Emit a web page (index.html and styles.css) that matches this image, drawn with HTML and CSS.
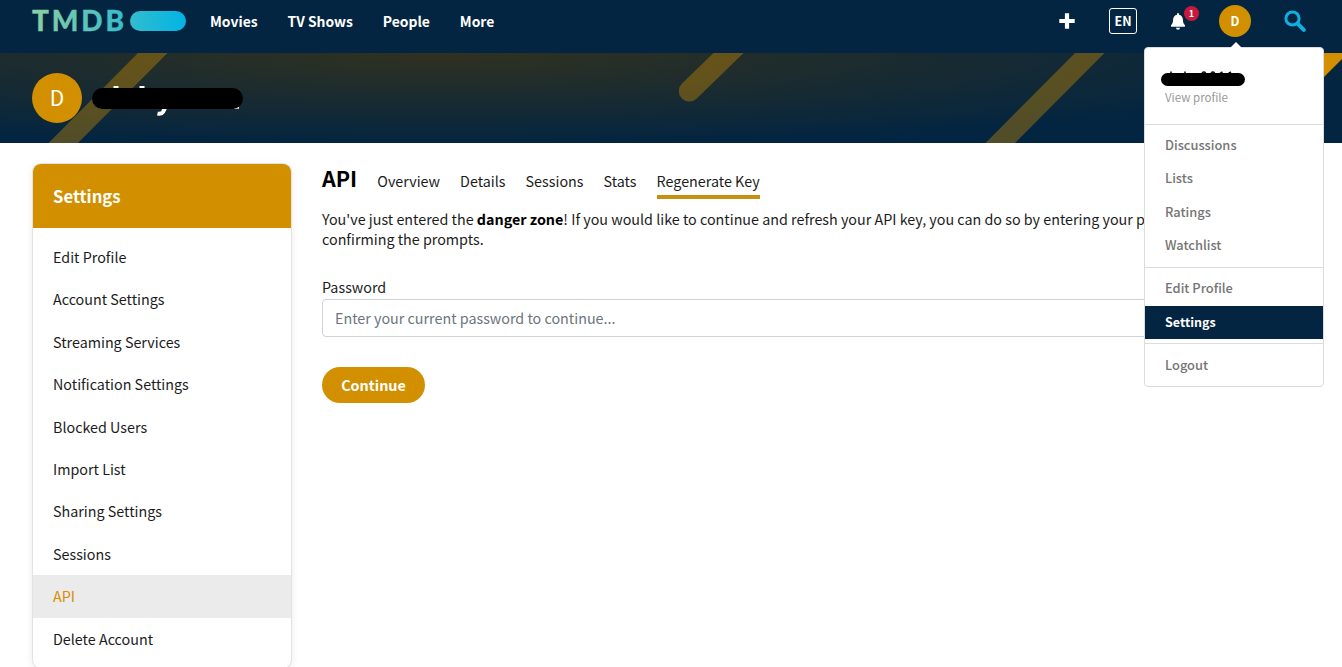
FILE: index.html
```html
<!DOCTYPE html>
<html lang="en">
<head>
<meta charset="utf-8">
<title>API Settings</title>
<link rel="stylesheet" href="styles.css">
</head>
<body>
<header class="topbar">
  <svg class="logo" width="154" height="22" viewBox="0 0 154 22">
    <defs>
      <linearGradient id="brand" gradientUnits="userSpaceOnUse" x1="0" y1="0" x2="154" y2="0">
        <stop offset="0" stop-color="#90cea1"/>
        <stop offset=".56" stop-color="#3cbec9"/>
        <stop offset="1" stop-color="#01b4e4"/>
      </linearGradient>
    </defs>
    <text class="logo-text" x="0" y="21" textLength="92" fill="url(#brand)" stroke="url(#brand)" stroke-width=".3">TMDB</text>
    <rect x="98" y="1" width="56" height="20" rx="10" fill="url(#brand)"/>
  </svg>
  <nav class="primary">
    <a>Movies</a><a>TV Shows</a><a>People</a><a>More</a>
  </nav>
  <div class="tools">
    <svg class="plus" width="16" height="16" viewBox="0 0 16 16"><path d="M8 .3v15.400M.3 8h15.400" stroke="#fff" stroke-width="4.200"/></svg>
    <span class="lang">EN</span>
    <span class="bell">
      <svg width="14" height="17" viewBox="0 0 14 17"><path fill="#fff" d="M7 0a1 1 0 0 1 1 1v.7c2.3.5 3.9 2.4 3.9 4.9 0 3 .8 4.200 1.700 5.200.9.900.400 2-.6 2H1c-1 0-1.500-1.100-.6-2 .9-1 1.700-2.200 1.700-5.200C2.100 4.100 3.700 2.200 6 1.700V1a1 1 0 0 1 1-1zM5 14.700h4a2 2 0 0 1-4 0z"/></svg>
      <span class="badge">1</span>
    </span>
    <span class="avatar-small">D</span>
    <svg class="search" width="22" height="22" viewBox="0 0 22 22"><circle cx="8.500" cy="8.500" r="6.600" fill="none" stroke="#0fb0e0" stroke-width="3"/><path d="M13.500 13.500l6.300 6.300" stroke="#0fb0e0" stroke-width="4" stroke-linecap="round"/></svg>
  </div>
  <div class="menu">
    <div class="menu-head">
      <svg class="menu-name" width="86" height="18" viewBox="0 0 86 18"><path d="M11 3.500v4M25 3.500v4M42 5q2.500-2.500 4 1M51 5q2.500-2.500 4 1M60 5.500l2.500-1.500M68.500 5.500l2.500-1.500" fill="none" stroke="#111" stroke-width="1.600"/><rect x="1" y="5" width="84" height="13" rx="6.500"/></svg>
      <a class="view-profile">View profile</a>
    </div>
    <div class="menu-group"><a>Discussions</a><a>Lists</a><a>Ratings</a><a>Watchlist</a></div>
    <div class="menu-group"><a>Edit Profile</a><a class="selected">Settings</a></div>
    <div class="menu-group"><a>Logout</a></div>
  </div>
</header>
<section class="hero">
  <svg class="stripes" width="1342" height="90" viewBox="0 0 1342 90">
    <g fill="#d29001" fill-opacity=".38"><path d="M138 0h29.500L78 90H48.500zM1075 0h29.500L1015 90H985.500z"/><path d="M713.500 0L682 30.500a10.500 10.500 0 0 0 14.500 15.200L743.500 0z"/></g>
    <path d="M1319 0h29l-29 29z" fill="#d29001"/>
  </svg>
  <span class="avatar-large">D</span>
  <svg class="user-name" width="152" height="36" viewBox="0 0 152 36"><path d="M24 6v4M50 6v4" stroke="#fff" stroke-width="5"/><path d="M73.500 27l-2.500 5q-1.500 2.500-5.500 1.500" fill="none" stroke="#fff" stroke-width="4"/><path d="M142 27.500h5" stroke="#fff" stroke-width="2.500"/><rect x="0" y="8" width="151" height="21" rx="10.500"/></svg>
</section>
<main class="page">
  <aside class="sidebar">
    <h2>Settings</h2>
    <nav class="side-links"><a>Edit Profile</a><a>Account Settings</a><a>Streaming Services</a><a>Notification Settings</a><a>Blocked Users</a><a>Import List</a><a>Sharing Settings</a><a>Sessions</a><a class="current">API</a><a>Delete Account</a></nav>
  </aside>
  <section class="content">
    <div class="tabs"><h1>API</h1><a>Overview</a><a>Details</a><a>Sessions</a><a>Stats</a><a class="active">Regenerate Key</a></div>
    <p class="warning">You've just entered the <b>danger zone</b>! If you would like to continue and refresh your API key, you can do so by entering your password and confirming the prompts.</p>
    <label class="field-label" for="password">Password</label>
    <input class="field" id="password" type="password" placeholder="Enter your current password to continue...">
    <button class="continue">Continue</button>
  </section>
</main>
</body>
</html>
```
FILE: styles.css
```css
* { box-sizing: border-box; }
body {
  margin: 0;
  height: 667px;
  overflow: hidden;
  background: #fff;
  color: #000;
  font: 14.32px/20px "Noto Sans CJK SC", "Noto Sans", sans-serif;
}
h1, h2, p { margin: 0; }

.topbar {
  position: relative;
  z-index: 2;
  height: 53px;
  padding: 0 36px 11px 32px;
  display: flex;
  align-items: center;
  background: #032541;
  color: #fff;
}
.logo { display: block; overflow: visible; }
.logo-text { font: 900 28px Lato, sans-serif; }
.primary { display: flex; gap: 29.9px; margin-left: 24px; font-size: 13.9px; font-weight: 700; }
.tools { display: flex; align-items: center; margin-left: auto; }
.plus { margin-right: 34px; }
.lang {
  width: 28px;
  height: 26px;
  margin-right: 34px;
  border: 1px solid #fff;
  border-radius: 3px;
  font-size: 12.5px;
  font-weight: 700;
  line-height: 24px;
  text-align: center;
}
.bell { position: relative; display: flex; margin-right: 34px; }
.badge {
  position: absolute;
  left: 13px;
  top: -7px;
  width: 15px;
  height: 15px;
  border-radius: 50%;
  background: #c8193c;
  font-size: 9px;
  font-weight: 700;
  line-height: 15px;
  text-align: center;
}
.avatar-small {
  width: 32px;
  height: 32px;
  margin-right: 33px;
  border-radius: 50%;
  background: #d29001;
  font-size: 12.5px;
  font-weight: 700;
  line-height: 32px;
  text-align: center;
}

.menu {
  position: absolute;
  left: 1144px;
  top: 47px;
  width: 180px;
  height: 340px;
  border: 1px solid #dbdcde;
  border-radius: 4px;
  background: #fff;
  color: #757575;
  font-size: 12.85px;
  font-weight: 500;
}
.menu::before {
  content: "";
  position: absolute;
  left: 85px;
  top: -6px;
  border: 6px solid transparent;
  border-top: 0;
  border-bottom-color: #fff;
}
.menu-head { height: 76px; padding: 20px 15px 0; }
.menu-name { display: block; }
.view-profile { display: block; margin-left: 5px; font-size: 11.5px; font-weight: 400; line-height: 22px; color: #999; }
.menu-group { border-top: 1px solid #dbdcde; padding: 4px 0; }
.menu-group a { display: block; padding: 0 0 2px 20px; line-height: 31.4px; }
.menu-group + .menu-group { padding-top: 4.6px; }
.menu-group .selected { background: #032541; color: #fff; font-size: 12.5px; font-weight: 700; }

.hero {
  position: relative;
  height: 90px;
  padding-left: 32px;
  display: flex;
  align-items: center;
  background: radial-gradient(ellipse 960px 92px at 440px 0, #303120, #032541) #032541;
}
.stripes { position: absolute; left: 0; top: 0; }
.avatar-large {
  position: relative;
  width: 50px;
  height: 50px;
  border-radius: 50%;
  background: #d29001;
  color: #fff;
  font-size: 21px;
  line-height: 48px;
  text-align: center;
}
.user-name { position: relative; margin-left: 10px; }

.page { display: flex; gap: 31px; padding: 21px 0 0 33px; color: #1c1c1c; }
.sidebar {
  flex: none;
  width: 258px;
  height: 504px;
  overflow: hidden;
  border-radius: 8px;
  box-shadow: 0 0 0 1px #e3e3e3, 0 2px 8px rgba(0, 0, 0, .1);
}
.sidebar h2 { height: 64px; padding-left: 20px; background: #d29001; color: #fff; font-size: 16.7px; line-height: 65px; }
.side-links { padding-top: 8px; }
.side-links a { display: block; padding-left: 20px; line-height: 42.4px; }
.side-links .current { background: #ebebeb; color: #d29001; }

.content { width: 988px; }
.tabs { display: flex; align-items: baseline; gap: 20.05px; height: 35px; }
.tabs h1 { color: #000; font-size: 21.5px; line-height: 28px; }
.tabs a { padding-bottom: 4px; }
.tabs .active { border-bottom: 4px solid #c8900f; }
.warning { margin-top: 10px; padding-right: 30px; }
.warning b { color: #000; }
.field-label { display: block; margin-top: 28px; }
.field {
  display: block;
  width: 100%;
  height: 38px;
  margin-top: 2px;
  padding: 0 12px 2px;
  border: 1px solid #ced4da;
  border-radius: 4px;
  font: inherit;
}
.field::placeholder { color: #6c757d; }
.continue {
  width: 103px;
  height: 36px;
  margin-top: 30px;
  padding: 0;
  border: 0;
  border-radius: 18px;
  background: #d29001;
  color: #fff;
  font: 700 14.32px/36px "Noto Sans CJK SC", sans-serif;
}
```
